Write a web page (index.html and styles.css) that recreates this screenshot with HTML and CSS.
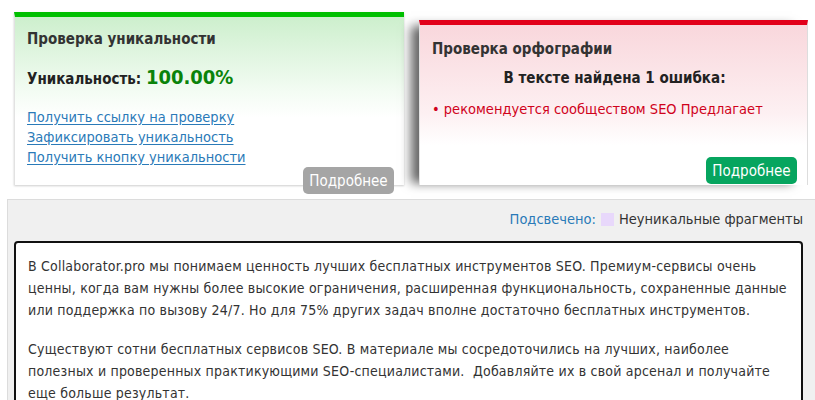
FILE: index.html
```html
<!DOCTYPE html>
<html lang="ru">
<head>
<meta charset="utf-8">
<link rel="stylesheet" href="styles.css">
</head>
<body>
<div class="cards">
  <div class="card card-uniq">
    <div class="card-title">Проверка уникальности</div>
    <div class="uniq-line">Уникальность: <span class="uniq-value">100.00%</span></div>
    <div class="links">
      <a href="#">Получить ссылку на проверку</a>
      <a href="#">Зафиксировать уникальность</a>
      <a href="#">Получить кнопку уникальности</a>
    </div>
    <div class="card-foot"><span class="btn btn-gray">Подробнее</span></div>
  </div>
  <div class="card card-spell">
    <div class="card-title">Проверка орфографии</div>
    <div class="err-head">В тексте найдена 1 ошибка:</div>
    <div class="err-item">• рекомендуется сообществом SEO Предлагает</div>
    <div class="card-foot"><span class="btn btn-green">Подробнее</span></div>
  </div>
</div>
<div class="panel">
  <div class="legend"><span class="legend-label">Подсвечено:</span><span class="swatch"></span><span>Неуникальные фрагменты</span></div>
  <div class="textbox">
    <p>В Collaborator.pro мы понимаем ценность лучших бесплатных инструментов SEO. Премиум-сервисы очень ценны, когда вам нужны более высокие ограничения, расширенная функциональность, сохраненные данные или поддержка по вызову 24/7. Но для 75% других задач вполне достаточно бесплатных инструментов.</p>
    <p>Существуют сотни бесплатных сервисов SEO. В материале мы сосредоточились на лучших, наиболее полезных и проверенных практикующими SEO-специалистами.&nbsp; Добавляйте их в свой арсенал и получайте еще больше результат.</p>
  </div>
</div>
</body>
</html>
```
FILE: styles.css
```css
html, body {
  margin: 0;
  padding: 0;
  background: #fff;
}
body {
  font-family: "DejaVu Sans Condensed", "DejaVu Sans", sans-serif;
  font-stretch: condensed;
  font-size: 14.5px;
  color: #333;
  overflow: hidden;
}
.cards {
  display: flex;
  align-items: flex-end;
  padding: 12px 0 0 14px;
  gap: 15px;
  height: 173px;
}
.card {
  box-sizing: border-box;
  display: flex;
  flex-direction: column;
  border-left: 1px solid #e2e2e2;
  box-shadow: 0 1px 2px rgba(0, 0, 0, 0.2);
  padding: 0 10px 1px 12px;
}
.card-uniq {
  width: 390px;
  height: 173px;
  border-top: 5px solid #00c000;
  background: linear-gradient(#cdefcd 0%, #f4fcf4 45%, #fff 60%);
}
.card-spell {
  width: 389px;
  height: 165px;
  border-top: 5px solid #e2001a;
  border-right: 1px solid #ddd;
  background: linear-gradient(#f9d7dc 0%, #fdf0f2 55%, #fff 75%);
  box-shadow: -12px 2px 10px -4px rgba(0, 0, 0, 0.6);
}
.card-title {
  font-weight: bold;
  font-size: 15px;
  color: #333;
  margin-top: 12px;
  line-height: 20px;
}
.card-spell .card-title {
  margin-top: 14px;
}
.uniq-line {
  font-weight: bold;
  font-size: 15px;
  color: #222;
  margin-top: 15px;
  line-height: 26px;
}
.uniq-value {
  color: #0a830a;
  font-size: 20px;
}
.links {
  display: flex;
  flex-direction: column;
  margin-top: 15px;
}
.links a {
  color: #2a7ab8;
  line-height: 20px;
  text-underline-offset: 2px;
}
.err-head {
  font-weight: bold;
  font-size: 15px;
  text-align: center;
  color: #222;
  margin-top: 9px;
  line-height: 20px;
}
.err-item {
  color: #d0021b;
  margin-top: 11px;
  line-height: 20px;
}
.card-foot {
  margin-top: auto;
  display: flex;
  justify-content: flex-end;
}
.btn {
  display: inline-flex;
  align-items: center;
  justify-content: center;
  width: 91px;
  height: 27px;
  border-radius: 5px;
  color: #fff;
  font-size: 15px;
}
.btn-gray {
  background: #a5a5a5;
}
.btn-green {
  background: #06a55f;
}
.panel {
  margin: 14px 0 0 7px;
  background: #f0f0f0;
  border-top: 1px solid #dcdcdc;
  border-left: 1px solid #dcdcdc;
  padding: 9px 0 0 6px;
  height: 220px;
}
.legend {
  display: flex;
  justify-content: flex-end;
  align-items: center;
  gap: 5px;
  padding-right: 12px;
  line-height: 20px;
  color: #333;
}
.legend-label {
  color: #2a7ab8;
}
.swatch {
  width: 13px;
  height: 13px;
  background: #e8d8fb;
}
.textbox {
  margin-top: 12px;
  width: 789px;
  box-sizing: border-box;
  background: #fff;
  border: 2px solid #111;
  border-radius: 4px;
  padding: 12px 8px 20px 12px;
  color: #333;
  font-size: 14px;
  letter-spacing: 0.2px;
  line-height: 22px;
  height: 200px;
}
.textbox p {
  margin: 0 0 17px 0;
}
```
